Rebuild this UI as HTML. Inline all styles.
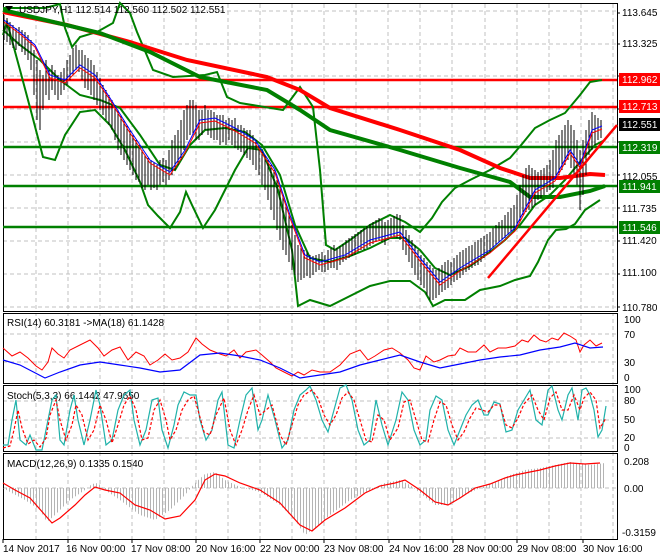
<!DOCTYPE html>
<html><head><meta charset="utf-8"><style>
body{margin:0;background:#fff;}
svg{display:block;font-family:"Liberation Sans",sans-serif;font-size:10px;}
</style></head><body>
<svg width="660" height="560" viewBox="0 0 660 560" xmlns="http://www.w3.org/2000/svg">
<defs>
<pattern id="hist" width="3" height="10" patternUnits="userSpaceOnUse"><rect x="0" y="0" width="1" height="10" fill="#b4b4b4"/></pattern>
</defs>
<rect width="660" height="560" fill="#fff"/>
<g stroke="#c0c0c0" stroke-dasharray="4,3" stroke-width="1">
<path d="M36 4V539M68 4V539M100 4V539M132 4V539M164 4V539M196 4V539M228 4V539M260 4V539M292 4V539M324 4V539M356 4V539M388 4V539M420 4V539M452 4V539M485 4V539M517 4V539M549 4V539M581 4V539M613 4V539"/>
<path d="M3 11H617M3 44H617M3 76H617M3 109H617M3 142H617M3 175H617M3 208H617M3 241H617M3 274H617M3 307H617"/>
<path d="M3 334H617M3 362H617M3 401H617M3 420H617M3 438H617M3 488H617"/>
</g>
<rect x="0" y="312" width="660" height="2" fill="#fff"/>
<g fill="none" stroke="#000" stroke-width="1">
<rect x="3.5" y="3.5" width="614" height="308"/>
<rect x="3.5" y="313.5" width="614" height="70"/>
<rect x="3.5" y="385.5" width="614" height="66"/>
<rect x="3.5" y="453.5" width="614" height="86"/>
</g>
<g stroke-width="2.5">
<path d="M3 80H617M3 107H617" stroke="#f00"/>
<path d="M3 147H617M3 186H617M3 227H617" stroke="#008000"/>
</g>
<g fill="none" stroke="#008000" stroke-width="2">
<path d="M3 8L25 8L45 8L60 4L65 28L72 47L80 37L97 32L113 23L120 3L130 13L137 32L153 70L173 77L205 75L217 72L227 97L240 103L283 110L300 87L313 107L320 170L326 245L335 250L350 240L370 225L390 215L405 222L420 232L432 218L442 202L455 188L470 180L490 170L510 158L522 144L535 128L550 120L565 113L580 95L590 82L602 80"/>
<path d="M3 35L7 22L20 70L32 115L43 157L55 160L65 135L80 112L95 110L110 125L125 150L140 182L148 205L158 216L170 228L180 212L186 192L192 205L203 228L215 210L225 190L235 170L248 148L262 150L278 190L292 250L298 306L310 300L330 306L350 296L370 286L390 281L410 281L425 292L433 306L445 300L465 300L480 290L500 286L515 280L530 276L538 262L548 240L556 230L566 229L575 224L585 210L600 200"/>
<path d="M3 30L20 45L40 60L60 80L80 95L100 100L120 108L140 135L160 165L175 170L190 145L205 130L225 128L245 132L262 145L280 175L295 225L310 258L330 262L350 256L370 248L390 238L405 238L420 250L435 268L450 275L470 266L490 252L505 240L520 225L535 205L550 195L565 180L580 162L595 145L605 140"/>
</g>
<path d="M3 12L67 25L130 42L187 60L267 77L300 90L330 108L400 130L460 150L500 168L530 178L560 178L590 174L605 175" fill="none" stroke="#f00" stroke-width="4"/>
<path d="M3 10L100 33L150 52L200 77L267 90L300 110L330 130L400 150L460 168L510 182L530 197L560 197L590 191L605 186" fill="none" stroke="#008000" stroke-width="4"/>
<g stroke="#000" stroke-width="1">
<path d="M4 15V40M7 18V42M10 22V45M13 25V48M16 28V50M19 27V46M22 30V52M25 32V55M28 35V60M31 40V70M34 50V95M37 60V120M40 70V130M43 75V110M46 60V95M49 70V100M52 65V90M55 70V95M58 75V100M61 72V95M64 68V90M67 60V85M70 55V80M73 48V75M76 45V70M79 50V72M82 50V80M85 55V88M88 58V90M91 60V95M94 65V100M97 72V105M100 78V110M103 85V115M106 90V120M109 95V125M112 100V130M115 105V140M118 110V150M121 115V155M124 120V160M127 125V165M130 130V170M133 135V175M136 140V180M139 145V182M142 150V188M145 155V190M148 158V185M151 160V190M154 162V188M157 165V190M160 160V185M163 158V182M166 160V185M169 150V180M172 140V175M175 135V170M178 130V165M181 120V160M184 110V150M187 105V140M190 100V135M193 100V135M196 105V140M199 110V140M202 110V135M205 105V130M208 110V135M211 110V138M214 112V140M217 115V140M220 115V145M223 115V142M226 120V145M229 118V140M232 120V145M235 118V148M238 125V150M241 125V152M244 128V155M247 130V158M250 130V160M253 135V165M256 140V170M259 145V175M262 150V185M265 155V190M268 160V200M271 165V210M274 170V220M277 180V230M280 185V240M283 195V250M286 205V255M289 215V262M292 225V270M295 235V275M298 245V282M301 248V280M304 250V278M307 252V276M310 255V278M313 256V275M316 255V272M319 254V270M322 252V272M325 255V272M328 250V270M331 248V268M334 245V268M337 248V270M340 246V265M343 244V262M346 240V260M349 238V258M352 236V256M355 234V255M358 232V252M361 230V250M364 228V250M367 226V248M370 224V246M373 222V244M376 220V242M379 218V240M382 220V242M385 222V245M388 220V240M391 218V238M394 216V236M397 214V238M400 215V240M403 225V250M406 230V255M409 235V262M412 240V268M415 245V275M418 250V280M421 255V285M424 258V288M427 262V295M430 265V300M433 268V300M436 270V298M439 268V295M442 265V292M445 262V290M448 260V288M451 262V285M454 258V282M457 255V280M460 252V278M463 250V275M466 248V272M469 246V270M472 245V268M475 242V266M478 240V265M481 238V262M484 236V258M487 234V255M490 232V252M493 228V248M496 225V245M499 222V242M502 220V240M505 215V238M508 212V235M511 208V232M514 205V230M517 195V228M520 185V222M523 175V215M526 168V212M529 165V210M532 168V208M535 170V205M538 172V200M541 170V198M544 168V195M547 165V192M550 160V190M553 150V188M556 140V180M559 135V175M562 130V170M565 125V165M568 120V160M571 125V168M574 130V175M577 140V185M580 150V210M583 140V195M586 130V175M589 120V155M592 112V150M595 115V145M598 118V140M601 120V138"/>
</g>
<path d="M4 20L20 32L35 45L50 75L65 80L80 65L95 75L110 98L130 130L150 160L170 172L185 150L200 120L215 118L235 128L255 140L275 170L290 215L305 255L320 262L345 255L370 240L400 232L420 258L440 282L460 268L490 250L515 228L535 190L555 178L570 150L580 165L592 130L602 126" fill="none" stroke="#00f" stroke-width="1"/>
<path d="M4 22L20 34L35 47L50 78L65 83L80 68L95 78L110 100L130 133L150 163L170 175L185 153L200 123L215 121L235 131L255 143L275 173L290 218L305 258L320 265L345 258L370 243L400 235L420 261L440 285L460 271L490 253L515 231L535 193L555 181L570 153L580 168L592 133L602 129" fill="none" stroke="#f00" stroke-width="1"/>
<path d="M488 278L617 125" stroke="#f00" stroke-width="2.5"/>
<path d="M5 6L13 6L9 11Z" fill="#000"/>
<text x="19" y="13" fill="#000">USDJPY,H1  112.514 112.560 112.502 112.551</text>
<g fill="#000">
<text x="622" y="16">113.645</text>
<text x="622" y="47">113.325</text>
<text x="622" y="180">112.055</text>
<text x="622" y="212">111.735</text>
<text x="622" y="244">111.420</text>
<text x="622" y="276">111.100</text>
<text x="622" y="311">110.780</text>
</g>
<g stroke="#000"><path d="M617 13h3M617 44h3M617 76h3M617 109h3M617 142h3M617 175h3M617 208h3M617 241h3M617 274h3M617 307h3"/></g>
<rect x="619" y="73" width="41" height="13" fill="#f00"/><text x="622" y="83" fill="#fff">112.962</text>
<rect x="619" y="100" width="41" height="13" fill="#f00"/><text x="622" y="110" fill="#fff">112.713</text>
<rect x="619" y="118" width="41" height="13" fill="#000"/><text x="622" y="128" fill="#fff">112.551</text>
<rect x="619" y="141" width="41" height="13" fill="#008000"/><text x="622" y="151" fill="#fff">112.319</text>
<rect x="619" y="180" width="41" height="13" fill="#008000"/><text x="622" y="190" fill="#fff">111.941</text>
<rect x="619" y="221" width="41" height="13" fill="#008000"/><text x="622" y="231" fill="#fff">111.546</text>
<text x="7" y="326" fill="#000">RSI(14) 60.3181  -&gt;MA(18) 61.1428</text>
<g fill="#000"><text x="624" y="323">100</text><text x="624" y="338">70</text><text x="624" y="366">30</text><text x="624" y="381">0</text></g>
<path d="M3 348L12 356L20 352L28 358L36 366L42 370L48 362L52 348L58 354L64 358L70 350L80 345L90 340L98 348L104 356L112 350L120 347L128 360L136 352L144 356L150 365L158 360L165 354L172 360L180 358L188 352L196 338L202 344L210 350L220 354L226 356L234 350L240 358L246 352L256 350L262 355L270 362L276 368L284 372L292 376L298 372L304 375L312 370L320 372L330 372L340 365L350 354L360 350L368 360L375 356L384 350L392 348L400 353L408 360L414 368L420 370L426 356L434 362L440 360L448 356L455 355L460 348L468 352L476 352L484 345L490 352L498 348L506 348L515 346L522 340L528 342L534 335L540 340L546 342L552 338L558 340L564 333L570 336L576 340L580 352L584 345L590 340L596 346L602 343" fill="none" stroke="#f00" stroke-width="1"/>
<path d="M3 360L20 365L45 378L60 372L80 365L100 362L120 365L140 368L160 372L180 370L200 355L220 353L240 356L260 360L280 368L300 378L320 375L340 372L360 365L380 360L400 355L420 362L440 368L460 364L480 360L500 357L520 355L540 350L560 347L575 343L590 348L603 347" fill="none" stroke="#00f" stroke-width="1.2"/>
<text x="7" y="399" fill="#000">Stoch(5,3,3) 66.1442 47.9650</text>
<g fill="#000"><text x="624" y="393">100</text><text x="624" y="404">80</text><text x="624" y="423">50</text><text x="624" y="441">20</text><text x="624" y="451">0</text></g>
<path d="M3 445L8 445L12 420L16 400L20 440L26 445L30 435L36 450L42 450L48 420L52 400L56 395L60 440L64 445L70 410L74 395L78 420L84 445L90 420L96 390L100 405L106 445L112 440L118 410L124 395L130 390L134 420L140 445L146 430L152 400L158 398L162 430L168 448L174 425L178 405L184 392L190 395L196 395L200 420L206 440L212 430L218 400L222 392L228 445L234 448L240 420L246 395L252 388L258 430L262 420L268 395L275 420L282 448L288 440L294 410L300 395L306 390L310 386L316 400L322 420L328 432L334 410L340 388L346 385L352 400L358 430L364 445L370 440L376 400L382 425L388 445L396 420L402 392L408 400L414 430L420 445L426 440L430 410L436 396L442 400L448 430L454 445L460 430L466 415L472 405L478 400L484 415L488 415L494 402L500 404L506 432L512 430L518 410L524 400L530 390L536 420L542 425L548 390L552 386L558 410L562 420L568 395L572 388L578 420L582 390L586 388L590 395L594 410L598 437L602 430L606 406" fill="none" stroke="#20b2aa" stroke-width="1.2"/>
<path d="M3 448L10 446L14 430L18 410L22 428L28 444L34 440L40 447L46 438L50 415L56 400L60 420L66 440L72 425L76 405L82 415L88 440L94 430L100 405L106 420L112 443L118 425L124 405L130 396L136 410L142 440L148 438L154 410L160 400L166 420L170 440L176 430L182 410L188 400L194 396L198 410L204 432L210 435L216 415L224 398L230 430L236 445L242 430L248 410L254 395L260 415L266 410L272 405L280 435L286 445L292 425L298 405L304 395L312 390L318 398L324 415L330 425L336 415L342 398L348 392L354 400L360 420L366 440L372 442L378 415L384 420L390 440L398 428L404 402L410 400L416 420L422 440L428 442L434 420L440 402L446 405L452 425L458 440L464 432L470 418L476 408L482 410L488 412L494 405L500 405L506 425L512 428L518 418L524 404L532 395L538 410L544 420L550 398L556 392L562 410L568 410L574 395L580 410L584 398L590 392L596 400L600 428L606 418" fill="none" stroke="#f00" stroke-width="1.2" stroke-dasharray="3,2"/>
<text x="7" y="467" fill="#000">MACD(12,26,9) 0.1335 0.1540</text>
<g fill="#000"><text x="624" y="465">0.208</text><text x="624" y="492">0.00</text><text x="622" y="536">-0.3159</text></g>
<polygon points="3,488 10,492 25,500 40,510 47,522 55,515 70,500 85,490 92,484 98,483 105,490 120,500 140,515 155,520 170,510 185,495 195,483 205,474 215,472 225,480 240,487 260,492 280,505 295,520 305,535 315,528 330,515 350,500 370,490 385,483 400,480 410,485 420,493 435,505 450,505 465,495 480,488 495,482 510,475 525,470 540,468 555,465 570,462 590,465 605,463 605,488" fill="url(#hist)"/>
<path d="M3 483L15 490L30 498L45 515L52 523L60 518L75 505L85 495L95 487L105 490L120 493L135 505L150 510L165 519L180 516L195 500L205 480L215 474L225 476L240 483L260 490L280 503L300 525L312 531L325 520L345 508L365 493L380 486L395 483L405 480L420 490L435 502L448 505L460 498L475 488L490 484L505 478L515 475L525 473L540 470L555 466L570 463L585 464L600 463" fill="none" stroke="#f00" stroke-width="1.2"/>
<g stroke="#000"><path d="M3 539v4M68 539v4M132 539v4M196 539v4M260 539v4M324 539v4M389 539v4M453 539v4M517 539v4M583 539v4"/></g>
<g fill="#000">
<text x="3" y="552">14 Nov 2017</text>
<text x="66" y="552">16 Nov 00:00</text>
<text x="131" y="552">17 Nov 08:00</text>
<text x="196" y="552">20 Nov 16:00</text>
<text x="260" y="552">22 Nov 00:00</text>
<text x="324" y="552">23 Nov 08:00</text>
<text x="389" y="552">24 Nov 16:00</text>
<text x="453" y="552">28 Nov 00:00</text>
<text x="517" y="552">29 Nov 08:00</text>
<text x="583" y="552">30 Nov 16:00</text>
</g>
</svg>
</body></html>
